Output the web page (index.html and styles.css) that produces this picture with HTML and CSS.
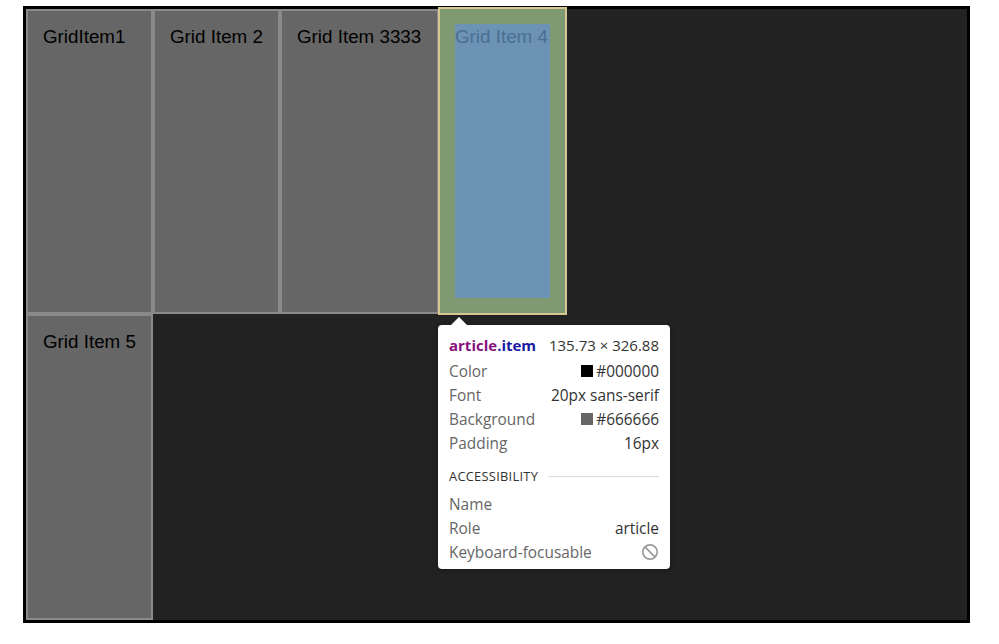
FILE: index.html
```html
<!DOCTYPE html>
<html>
<head>
<meta charset="utf-8">
<link rel="stylesheet" href="styles.css">
</head>
<body>
<main class="grid">
  <article class="item">GridItem1</article>
  <article class="item">Grid Item 2</article>
  <article class="item">Grid Item 3333</article>
  <article class="item inspected">Grid Item 4</article>
  <article class="item">Grid Item 5</article>
</main>

<div class="tooltip">
  <div class="tt-title">
    <span class="sel"><span class="tag">article</span><span class="cls">.item</span></span>
    <span class="dims">135.73 × 326.88</span>
  </div>
  <div class="tt-row"><span class="lbl">Color</span><span class="val"><i class="sw sw-black"></i>#000000</span></div>
  <div class="tt-row"><span class="lbl">Font</span><span class="val">20px sans-serif</span></div>
  <div class="tt-row"><span class="lbl">Background</span><span class="val"><i class="sw sw-grey"></i>#666666</span></div>
  <div class="tt-row"><span class="lbl">Padding</span><span class="val">16px</span></div>
  <div class="tt-section"><span class="sec-title">ACCESSIBILITY</span><span class="sec-line"></span></div>
  <div class="tt-row tt-first"><span class="lbl">Name</span><span class="val"></span></div>
  <div class="tt-row"><span class="lbl">Role</span><span class="val">article</span></div>
  <div class="tt-row"><span class="lbl">Keyboard-focusable</span><span class="val">
    <svg class="no-icon" width="18" height="18" viewBox="0 0 18 18"><circle cx="9" cy="9" r="7.2" fill="none" stroke="#9a9a9a" stroke-width="1.7"/><line x1="3.9" y1="3.9" x2="14.1" y2="14.1" stroke="#9a9a9a" stroke-width="1.7"/></svg>
  </span></div>
</div>
</body>
</html>
```
FILE: styles.css
```css
html, body {
  margin: 0;
  padding: 0;
  background: #ffffff;
}

body {
  position: relative;
  width: 999px;
  height: 644px;
  overflow: hidden;
}

.grid {
  box-sizing: border-box;
  margin: 6px 0 0 23px;
  width: 947px;
  height: 617px;
  border: 3px solid #000000;
  background: #222222;
  display: grid;
  grid-template-columns: 127px 127px 159px 128px;
  grid-template-rows: 305px 306px;
  align-content: start;
}

.item {
  box-sizing: border-box;
  background: #666666;
  border: 2px solid #8a8a8a;
  padding: 15px;
  font-family: "Liberation Sans", Arial, sans-serif;
  font-size: 18.8px;
  color: #000000;
  white-space: nowrap;
}

.inspected {
  margin: -2px 0 -1px -1px;
  line-height: 25.6px;
  border-color: #d7c593;
  color: #4a6f92;
  background:
    linear-gradient(#6c92b4, #6c92b4) content-box,
    linear-gradient(#7f9a73, #7f9a73) padding-box;
}

.tooltip {
  position: absolute;
  left: 438px;
  top: 325px;
  width: 232px;
  box-sizing: border-box;
  padding: 8px 11px 5px;
  background: #ffffff;
  border-radius: 4px;
  box-shadow: 0 1px 4px rgba(0, 0, 0, 0.35);
  font-family: "Open Sans", "Noto Sans", sans-serif;
  font-size: 15.4px;
  color: #5f5f5f;
}

.tooltip::before {
  content: "";
  position: absolute;
  left: 13px;
  top: -8px;
  border-left: 8px solid transparent;
  border-right: 8px solid transparent;
  border-bottom: 8px solid #ffffff;
}

.tt-title {
  height: 24px;
  display: flex;
  align-items: center;
  justify-content: space-between;
  margin-bottom: 2px;
  font-size: 15px;
}

.sel {
  font-weight: 700;
}

.tag {
  color: #881280;
}

.cls {
  color: #1a1aa6;
}

.dims {
  color: #333333;
}

.tt-row {
  height: 24px;
  display: flex;
  align-items: center;
  justify-content: space-between;
}

.lbl {
  color: #666666;
}

.val {
  color: #333333;
  display: flex;
  align-items: center;
}

.sw {
  display: inline-block;
  width: 12px;
  height: 12px;
  margin-right: 3px;
}

.sw-black {
  background: #000000;
}

.sw-grey {
  background: #666666;
}

.tt-section {
  height: 20px;
  margin-top: 11px;
  display: flex;
  align-items: center;
  gap: 10px;
}

.sec-title {
  font-size: 12.8px;
  letter-spacing: 0.3px;
  color: #333333;
}

.sec-line {
  flex: 1;
  height: 1px;
  background: #dcdcdc;
}

.tt-first {
  margin-top: 6px;
}

.no-icon {
  display: block;
  margin-right: 0;
}
```
